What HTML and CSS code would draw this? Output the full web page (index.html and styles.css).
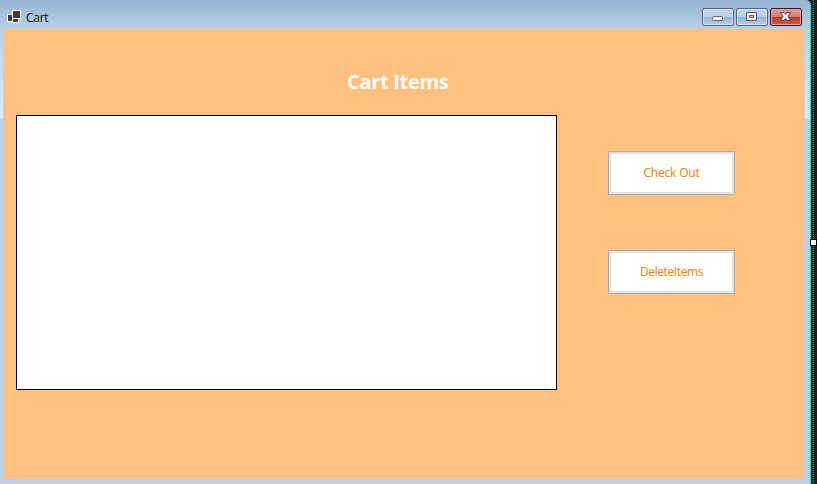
FILE: index.html
```
<!DOCTYPE html>
<html lang="en">
<head>
<meta charset="utf-8">
<title>Cart</title>
<link rel="stylesheet" href="styles.css">
</head>
<body>
<div class="desktop">
  <main class="window">
    <header class="titlebar">
      <svg class="app-icon" width="14" height="13" viewBox="0 0 14 13" shape-rendering="crispEdges">
        <path fill="#fff" d="M5 0h9v9h-2v4H5v-1H0V4h5z"/>
        <path fill="#3c3c3c" d="M6 1h7v7H6zM1 5h4v6H1zM6 9h5v3H6z"/>
      </svg>
      <span class="title">Cart</span>
      <div class="controls">
        <button class="control" aria-label="Minimize">
          <svg width="28" height="14" viewBox="0 0 28 14"><rect x="8.5" y="6.500" width="10" height="4" rx="1" fill="#f7f7f7" stroke="#5c6478"/></svg>
        </button>
        <button class="control" aria-label="Maximize">
          <svg width="28" height="14" viewBox="0 0 28 14"><path fill="#f7f7f7" stroke="#4d566c" fill-rule="evenodd" d="M8.500 2.500h10v8h-10zM11.500 5.500v2h4v-2z"/></svg>
        </button>
        <button class="control close" aria-label="Close">
          <svg width="28" height="14" viewBox="0 0 28 14"><path fill="#f7f7f7" stroke="#5b4a55" stroke-linejoin="round" d="M8.500 2.500h3.500l1.500 2 1.500-2h3.500l-2.500 4 2.500 4h-3.500l-1.500-2-1.500 2h-3.500l2.500-4z"/></svg>
        </button>
      </div>
    </header>
    <section class="form">
      <h1 class="heading">Cart Items</h1>
      <div class="content">
        <div class="list"></div>
        <div class="actions">
          <button class="action"><span class="checkout">Check Out</span></button>
          <button class="action"><span class="delete">DeleteItems</span></button>
        </div>
      </div>
    </section>
  </main>
  <div class="gutter"><i class="handle"></i></div>
</div>
</body>
</html>
```
FILE: styles.css
```
* { box-sizing: border-box; }
body { margin: 0; overflow: hidden; font-family: "Open Sans", "Noto Sans", sans-serif; }
button { font: inherit; padding: 0; }
.desktop { display: flex; width: 817px; height: 484px; background: #1b1b1b; }
.window {
  width: 811px; height: 484px; padding: 0 6px 5px 4px;
  border-right: 1px solid #23d3f3;
  border-top-right-radius: 5px;
  background: linear-gradient(#98b4d2 0, #b9d1ea 29px, #dce9f7 118px, #b9d1ea 120px, #b9d1ea 100%);
}
.titlebar { display: flex; height: 29px; padding: 8px 2px 0 3px; }
.app-icon { margin-top: 2px; }
.title { margin: 1px 0 0 5px; font-size: 12px; line-height: 17px; letter-spacing: -0.3px; color: #000; }
.controls { display: flex; gap: 2px; margin-left: auto; }
.control {
  display: grid; place-items: center; width: 32px; height: 18px;
  border: 1px solid #52688b; border-radius: 2px;
  box-shadow: inset 0 0 0 1px #d1e1f2;
  background: linear-gradient(#bfd2e8 0 48%, #99b4d2 50%, #b6cce5);
}
.control svg { display: block; }
.close {
  border-color: #43121d; box-shadow: inset 0 0 0 1px #e2a198;
  background: linear-gradient(#e0a093 0, #d17c6c 48%, #b23a25 50%, #c9604b);
}
.form { width: 800px; height: 450px; padding: 36px 12px 0; background: #ffc080; box-shadow: 0 0 0 1px #b9d1ea; }
.heading {
  width: 102px; height: 50px; margin: 0 0 0 331px;
  font-size: 20px; line-height: 33px; font-weight: 700; white-space: nowrap; color: #fff;
  letter-spacing: -0.3px;
}
.content { display: flex; }
.list { width: 541px; height: 275px; border: 1px solid #000; background: #fff; }
.actions { display: flex; flex-direction: column; gap: 55px; padding: 36px 0 0 51px; }
.action {
  width: 127px; height: 44px; border: 1px solid #adadad;
  box-shadow: inset 0 0 0 2px #e1e1e1; border-radius: 0; background: #fff;
  font-size: 12px; line-height: 16px; color: #ff8000;
}
.checkout, .delete { white-space: nowrap; letter-spacing: -0.2px; }
.delete { letter-spacing: -0.4px; }
.gutter {
  position: relative; width: 6px;
  background: repeating-linear-gradient(#777 0 1px, #1b1b1b 1px 2px) 2px 0 / 1px 100% no-repeat;
}
.handle {
  position: absolute; left: -1px; top: 239px; width: 7px; height: 7px;
  border: 1px solid #000; background: #fff;
}
```
